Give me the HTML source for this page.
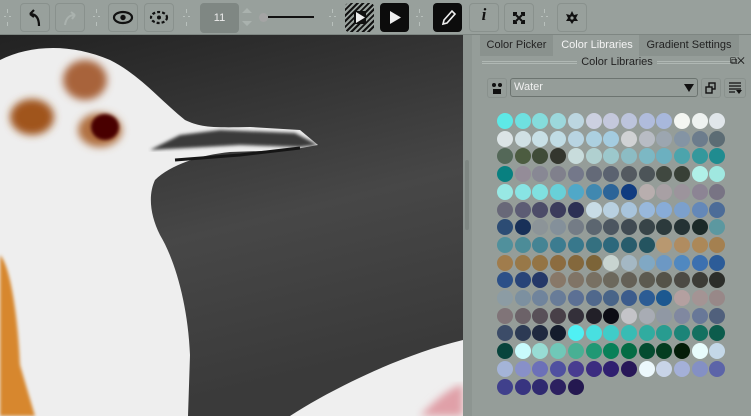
<!DOCTYPE html><html><head><style>
*{box-sizing:border-box;margin:0;padding:0}
body{width:751px;height:416px;overflow:hidden;background:#959d99;font-family:"Liberation Sans",sans-serif;position:relative}
.tb{position:absolute;left:0;top:0;width:751px;height:35px;background:#98a09c;border-bottom:1px solid #7e8682}
.b{position:absolute;top:3px;width:30px;height:29px;border:1px solid #89918d;border-radius:4px}
.g{position:absolute;top:9px;width:7px;height:17px}
.g::before,.g::after{content:"";position:absolute;left:3px;width:1px;height:4px;background:#b8c0bc;top:0;box-shadow:0 13px 0 #b8c0bc}
.g::after{left:0;top:7px;width:7px;height:1px;box-shadow:none;background:linear-gradient(90deg,#b8c0bc 30%,transparent 30% 70%,#b8c0bc 70%)}
svg{position:absolute}
.panel{position:absolute;left:472px;top:35px;width:279px;height:381px;background:#959d99}
.tab{position:absolute;top:0;height:21px;font-size:11px;line-height:21px;text-align:center;color:#222}
.sw{position:absolute;left:497px;top:113px;width:240px}
.sw i{position:absolute;width:16px;height:16px;border-radius:50%}
</style></head><body>
<div class="tb">
<div class="g" style="left:4px"></div>
<div class="b" style="left:20px"></div><svg style="left:20px;top:3px" width="30" height="29"><path d="M19 23 C19 15 16 11 10 11 M10 11 L14 7 M10 11 L14 14" stroke="#111" stroke-width="2.2" fill="none"/></svg>
<div class="b" style="left:55px"></div><svg style="left:55px;top:3px" width="30" height="29"><path d="M10 22 C11 15 14 12 20 12 M20 12 L16 9 M20 12 L17 16" stroke="#aab2ae" stroke-width="2" fill="none"/></svg>
<div class="g" style="left:93px"></div>
<div class="b" style="left:108px"></div><svg style="left:108px;top:3px" width="30" height="29"><ellipse cx="15" cy="14.5" rx="9" ry="5.5" fill="none" stroke="#111" stroke-width="2.2"/><circle cx="15" cy="14.5" r="2.7" fill="#111"/></svg>
<div class="b" style="left:144px"></div><svg style="left:144px;top:3px" width="30" height="29"><ellipse cx="15" cy="14.5" rx="8" ry="5.5" fill="none" stroke="#111" stroke-width="2.2" stroke-dasharray="3 2"/><circle cx="15" cy="14.5" r="2" fill="#111"/></svg>
<div class="g" style="left:183px"></div>
<div style="position:absolute;left:200px;top:3px;width:39px;height:30px;background:#7f8783;border-radius:4px;color:#eee;font-size:11px;line-height:30px;text-align:center">11</div>
<svg style="left:240px;top:6px" width="14" height="22"><path d="M2 7 L7 2 L12 7Z M2 15 L7 20 L12 15Z" fill="#aab2ae"/></svg>
<div style="position:absolute;left:259px;top:13px;width:9px;height:9px;border-radius:50%;background:#a4a4a4"></div>
<div style="position:absolute;left:268px;top:16px;width:46px;height:2px;background:#111"></div>
<div class="g" style="left:329px"></div>
<div style="position:absolute;left:345px;top:3px;width:29px;height:29px;border-radius:4px;background:repeating-linear-gradient(135deg,#111 0 2px,#98a09c 2px 4px)"></div>
<svg style="left:345px;top:3px" width="29" height="29"><rect x="9" y="8" width="12" height="13" fill="#111"/><path d="M11 9 L20 14.5 L11 20Z" fill="#eee"/></svg>
<div style="position:absolute;left:380px;top:3px;width:29px;height:29px;border-radius:4px;background:#0c0c0c"></div>
<svg style="left:380px;top:3px" width="29" height="29"><path d="M10 8 L21 14.5 L10 21Z" fill="#eee"/></svg>
<div class="g" style="left:416px"></div>
<div style="position:absolute;left:433px;top:3px;width:29px;height:29px;border-radius:4px;background:#0c0c0c"></div>
<svg style="left:433px;top:3px" width="29" height="29"><path d="M10 21 L11 17 L19 8 L22 11 L14 20Z" fill="none" stroke="#eee" stroke-width="1.6"/></svg>
<div class="b" style="left:469px"></div><div style="position:absolute;left:469px;top:5px;width:30px;text-align:center;font:italic bold 17px 'Liberation Serif',serif;color:#111">i</div>
<div class="b" style="left:504px"></div><svg style="left:504px;top:3px" width="30" height="29"><path d="M10 10 L20 20 M20 10 L10 20" stroke="#111" stroke-width="2"/><path d="M9 9h4v2h-2v2h-2z M21 9v4h-2v-2h-2v-2z M9 21v-4h2v2h2v2z M21 21h-4v-2h2v-2h2z" fill="#111"/></svg>
<div class="g" style="left:541px"></div>
<div class="b" style="left:557px"></div><svg style="left:557px;top:3px" width="30" height="29"><path d="M15 8 L17 12 L21 11 L19 15 L21 18 L17 18 L15 21 L13 18 L9 18 L11 15 L9 11 L13 12Z" fill="#111"/><circle cx="15" cy="15" r="1.6" fill="#98a09c"/></svg>
</div>
<svg style="left:0;top:35px" width="463" height="381">
<defs><linearGradient id="bg" x1="0" y1="0" x2="0.3" y2="1"><stop offset="0" stop-color="#222"/><stop offset="0.6" stop-color="#474747"/><stop offset="1" stop-color="#3a3a3a"/></linearGradient>
<filter id="bl"><feGaussianBlur stdDeviation="4"/></filter><filter id="bl2"><feGaussianBlur stdDeviation="1.5"/></filter></defs>
<rect width="463" height="381" fill="url(#bg)"/>
<path d="M0 25 C30 10 70 8 110 25 C140 40 160 65 185 85 C200 92 210 93 250 92 L300 95 L318 110 L290 115 L230 117 C200 120 170 130 155 145 C148 160 150 180 160 200 C175 225 188 270 190 320 L188 381 L0 381Z" fill="#eeeeee"/>
<path d="M150 115 L240 110 L300 112 L318 110 L295 98 L220 95 L180 100Z" fill="#3a3a3a" filter="url(#bl2)"/>
<path d="M175 125 L240 120 L300 113" stroke="#151515" stroke-width="3" fill="none"/>
<g filter="url(#bl)">
<ellipse cx="85" cy="45" rx="22" ry="20" fill="#a8643a"/>
<ellipse cx="32" cy="82" rx="22" ry="18" fill="#a0541e"/>
<ellipse cx="100" cy="95" rx="22" ry="17" fill="#b07040"/>
</g>
<ellipse cx="105" cy="92" rx="14" ry="13" fill="#4a0000" filter="url(#bl2)"/>
<path d="M0 220 C10 230 18 280 20 330 L35 381 L0 381Z" fill="#d7872f" filter="url(#bl2)"/>
<path d="M290 381 C330 355 400 320 463 305 L463 381Z" fill="#efefef"/>
<path d="M420 381 C440 360 455 350 463 350 L463 381Z" fill="#e0a0a8" filter="url(#bl)"/>
</svg>
<div style="position:absolute;left:463px;top:35px;width:9px;height:381px;background:#8d9591"></div>
<div style="position:absolute;left:465px;top:160px;width:4px;height:70px;background:#7f8783;border-radius:2px"></div>
<div class="panel">
<div class="tab" style="left:8px;width:73px;background:#8a928e">Color Picker</div>
<div class="tab" style="left:83px;width:84px;color:#f4f4f4">Color Libraries</div>
<div class="tab" style="left:167px;width:100px;background:#8a928e">Gradient Settings</div>
<div style="position:absolute;left:10px;top:26px;width:262px;height:3px;border-top:1px solid #b0b8b4;border-bottom:1px solid #b0b8b4"></div>
<div style="position:absolute;left:105px;top:21px;width:80px;height:13px;background:#959d99;font-size:11px;line-height:13px;text-align:center;color:#222">Color Libraries</div>
<div style="position:absolute;left:258px;top:21px;width:22px;background:#959d99;font-size:10px;color:#111">⧉✕</div>
<div style="position:absolute;left:15px;top:43px;width:20px;height:20px;border:1px solid #89918d;border-radius:3px"></div>
<svg style="left:15px;top:43px" width="20" height="20"><circle cx="7" cy="7" r="2" fill="#111"/><circle cx="13" cy="7" r="2" fill="#111"/><rect x="6" y="11" width="8" height="5" fill="#111"/></svg>
<div style="position:absolute;left:38px;top:43px;width:188px;height:19px;border:1px solid #6c7470;border-radius:3px;background:#959d99;color:#f0f0f0;font-size:11px;line-height:17px;padding-left:3px">Water</div>
<svg style="left:212px;top:48px" width="10" height="9"><path d="M0 1 L10 1 L5 9Z" fill="#111"/></svg>
<div style="position:absolute;left:229px;top:43px;width:20px;height:20px;border:1px solid #89918d;border-radius:3px"></div>
<svg style="left:229px;top:43px" width="20" height="20"><rect x="8" y="5" width="6" height="6" fill="none" stroke="#111" stroke-width="1.4"/><rect x="5" y="9" width="6" height="6" fill="#959d99" stroke="#111" stroke-width="1.4"/></svg>
<div style="position:absolute;left:252px;top:43px;width:22px;height:20px;border:1px solid #89918d;border-radius:3px"></div>
<svg style="left:252px;top:43px" width="22" height="20"><path d="M5 5h12M5 8h12M5 11h12M5 14h6" stroke="#111" stroke-width="1.3"/><path d="M12 12h6l-3 4z" fill="#111"/></svg>
</div>
<div class="sw" id="sw"></div>
<script>
var c="5ee8e6 6fe0e0 85dcdc 9cd8dc bcd6e0 ccd0e0 c4c8dc bcc4dc b0bcdc a8b8dc f4f6f2 eef2f0 e0e6ea dce4e6 d0e0e4 c8e0e6 c0dce4 b8d4e2 acd0e0 a4cce0 d0d2d4 b8bcc4 9ca6b0 8494a4 6c7c8c 5c6c74 546858 4c5c40 404c38 34362e c8dcdc b0d0d0 9cc8cc 8cbcc4 7cb8c4 6cb0c0 4ca4ac 34989c 208c90 088080 948c98 888894 80808c 74788a 646a78 5a6270 545a60 4c5458 404840 384036 b0f0e8 a0e8e0 98e8e4 88e4e4 80e0e0 68d0d8 50a8c8 4088b0 2c6498 103c80 b8aeae a8a0a4 9c949c 8c8494 787484 686878 5c5c74 4c4c68 3c3c5c 2c3054 c8dce6 b8d0e0 a8c4dc 98b8dc 88acd8 7ca0cc 6488b8 4c6c98 2c4c74 183058 8c9498 84909a 747c86 5c6670 4c5660 404a52 384448 2c3a3c 243234 1c2a28 5c98a0 50909c 4c8c98 448494 3c7c90 38788c 347080 2c687c 285c6c 245460 b89870 b08c60 ac8858 a48050 a07c4c 987848 947444 8c6c40 84683c 7c6438 c8d4d0 a4b8c4 80a8c4 6c98c4 5088c0 3c70b0 2c5c98 2c5088 284478 243868 887868 807466 787062 6c685c 646056 5c5a50 545248 4c4a44 3c3c36 2c2e2a 8c9ca4 7c90a0 70849c 687c98 5c7094 50688c 486488 3c5c8c 2c5c94 1c5890 b4a0a0 a49494 988888 807478 6c6268 585058 484048 34303a 222028 0c0c14 c4c4c8 a8acb4 9098a4 8088a0 687898 50607c 3c4c68 2c3a54 202a40 141c2c 50f0f4 48e0e0 40ccc8 38bcb4 30aca0 289c90 1c8478 147060 0c5c4c 08443c c8fafc 98dcd4 70c8b8 48b094 209874 088058 046c44 044c30 043c20 041c08 e8fcfc c4d8e8 a4b4d8 8890c8 6c70b8 5050a0 483c90 3c2c80 302070 281858 ecf8fc c8d4e8 a4b0d8 8490c4 5c64a8 40408c 383480 302a70 2c2060 241850".split(" ");
var h="";c.forEach(function(x,i){h+='<i style="left:'+((i%13)*17.7).toFixed(1)+'px;top:'+(Math.floor(i/13)*17.7).toFixed(1)+'px;background:#'+x+'"></i>'});
document.getElementById("sw").innerHTML=h;
</script>
</body></html>
